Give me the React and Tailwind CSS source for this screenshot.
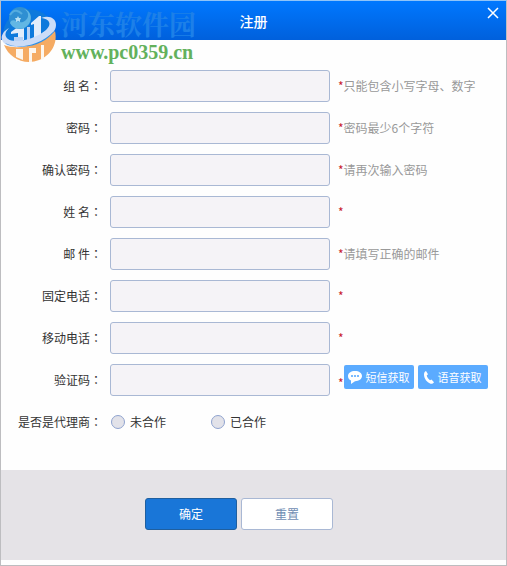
import React, { useState } from "react";

const FIELDS = [
  { id: "group", label: "组 名", hint: "只能包含小写字母、数字" },
  { id: "password", label: "密码", hint: "密码最少6个字符", type: "password" },
  { id: "confirm", label: "确认密码", hint: "请再次输入密码", type: "password" },
  { id: "name", label: "姓 名", hint: "" },
  { id: "email", label: "邮 件", hint: "请填写正确的邮件", type: "email" },
  { id: "phone", label: "固定电话", hint: "", type: "tel" },
  { id: "mobile", label: "移动电话", hint: "", type: "tel" },
];

const inputClass =
  "block h-8 w-[220px] shrink-0 rounded-[3px] border border-[#a9b8d4] bg-[#f5f3f7] px-2 text-xs outline-none focus:border-[#1976d2]";

const Colon = () => (
  <span className="font-['Noto_Sans_CJK_TC',sans-serif]">：</span>
);

const Star = () => <span className="leading-3 text-[#c8202c]">*</span>;

const Watermark = () => (
  <div className="pointer-events-none absolute left-0 top-1 flex gap-1">
    <svg width="56" height="60" viewBox="1 5 56 60" aria-hidden="true">
      {/* disc, blue above the ring and orange below */}
      <path d="M3 35A26 26 0 0 1 54 28L45 38L14 46Z" fill="#0d79dc" />
      <path d="M4 45C20 51 44 44 55 31C59 48 45 62 29 62C18 62 8 55 4 45Z" fill="#f5ab63" />
      {/* towers */}
      <path d="M11 32L22 24H24V40H18V33L11 34Z" fill="#e3edfb" />
      <path d="M31 23L39 16H41V36L34 39V24L31 25Z" fill="#e3edfb" />
      <path d="M14 37H23V42L14 43ZM27 27H30V40L27 41Z" fill="#b9d2f5" />
      <path d="M16 49H23V60L16 57ZM29 48H36V53H32V62H29ZM41 45H44V59L41 60Z" fill="#fdf6ee" />
      {/* ring */}
      <path
        d="M9 28C-2 34 -1 46 15 47C34 48 56 37 56 25C56 18 49 15 41 18C50 19 52 24 46 30C36 39 15 44 8 39C4 36 5 32 9 28Z"
        fill="#cbdcf8"
      />
      <path d="M5 43C12 49 39 48 54 31C47 43 25 52 5 43Z" fill="#2d8fe6" />
      {/* emblem */}
      <circle cx="20" cy="18" r="11" fill="#2f8fd2" />
      <path
        d="M10 23C13 15 19 27 26 20C30 16 28 11 24 9C32 11 33 21 27 26C21 31 13 29 10 23Z"
        fill="#62b7e4"
      />
      <path d="M10 15C14 8 19 11 22 14" fill="none" stroke="#55acdf" strokeWidth="2" />
      <path d="M18 16L19 18L21 18L20 20L20 22L18 21L16 22L16 20L15 18L17 18Z" fill="#b7e0f4" />
    </svg>
    <div className="flex flex-col pt-0.5">
      <span className="font-['Noto_Serif_CJK_SC','Noto_Sans_CJK_SC',serif] text-[27px] leading-[34px] font-bold text-[#1d80e8]">
        河东软件园
      </span>
      <span className="font-['Liberation_Serif',serif] text-[20px] leading-[22px] font-bold text-[#63b15c]">
        www.pc0359.cn
      </span>
    </div>
  </div>
);

const App = () => {
  const [values, setValues] = useState({});
  const [agent, setAgent] = useState("");

  const handleChange = (e) =>
    setValues((prev) => ({ ...prev, [e.target.name]: e.target.value }));

  const handleReset = () => {
    setValues({});
    setAgent("");
  };

  return (
    <div className="relative border border-[#bdbdc0] border-t-[#8fc4f8] bg-[#fefefe] pb-[5px] font-['Noto_Sans_CJK_SC',sans-serif] text-xs text-[#333]">
      {/* Title bar */}
      <header className="relative flex h-[39px] items-center justify-center bg-gradient-to-b from-[#0078ff] to-[#0060dc]">
        <h1 className="text-sm font-medium text-white">注册</h1>
        <button
          type="button"
          aria-label="关闭"
          className="absolute right-[7px] top-[6px] text-white"
        >
          <svg width="12" height="12" viewBox="0 0 12 12" fill="none" stroke="currentColor" strokeWidth="1.5">
            <path d="M1 1L11 11M11 1L1 11" />
          </svg>
        </button>
      </header>

      <form onSubmit={(e) => e.preventDefault()} onReset={handleReset}>
        <div className="flex flex-col gap-[10px] pt-[30px] pb-8">
          {FIELDS.map((field) => (
            <div key={field.id} className="flex items-center gap-2">
              <label htmlFor={field.id} className="w-[101px] shrink-0 text-right whitespace-nowrap">
                {field.label}
                <Colon />
              </label>
              <input
                id={field.id}
                name={field.id}
                type={field.type || "text"}
                value={values[field.id] || ""}
                onChange={handleChange}
                className={inputClass}
              />
              <span className="whitespace-nowrap text-[#999]">
                <Star />
                {field.hint}
              </span>
            </div>
          ))}

          {/* Verification code */}
          <div className="flex items-center gap-2">
            <label htmlFor="code" className="w-[101px] shrink-0 text-right whitespace-nowrap">
              验证码
              <Colon />
            </label>
            <input
              id="code"
              name="code"
              type="text"
              value={values.code || ""}
              onChange={handleChange}
              className={inputClass}
            />
            <div className="flex items-end self-start pt-px">
              <Star />
              <div className="flex gap-1">
                <button
                  type="button"
                  className="flex h-6 w-[70px] items-center justify-center gap-1 rounded-xs bg-[#5babff] text-[11px] whitespace-nowrap text-white"
                >
                  <svg width="14" height="13" viewBox="0 0 14 13" aria-hidden="true">
                    <path
                      d="M7 0C3 0 0 2 0 5C0 7 1 8.500 3 9.500L3 13L7 10.200C11 10.200 14 8 14 5C14 2 11 0 7 0Z"
                      fill="#fff"
                    />
                    <circle cx="4" cy="5" r="1.100" fill="#5babff" />
                    <circle cx="7" cy="5" r="1.100" fill="#5babff" />
                    <circle cx="10" cy="5" r="1.100" fill="#5babff" />
                  </svg>
                  短信获取
                </button>
                <button
                  type="button"
                  className="flex h-6 w-[70px] items-center justify-center gap-1 rounded-xs bg-[#5babff] text-[11px] whitespace-nowrap text-white"
                >
                  <svg width="10" height="13" viewBox="0 0 10 13" aria-hidden="true">
                    <path
                      d="M2 0L4 3.2L2.7 4.5C3.2 6.5 4.5 8.2 6 9.2L7.5 8.6L10 11.2C9 12.6 7.8 13 6.5 12.7C3 11.5 0 7.5 0 3.5C0 1.8 .8.6 2 0Z"
                      fill="#fff"
                    />
                  </svg>
                  语音获取
                </button>
              </div>
            </div>
          </div>

          <div role="radiogroup" aria-labelledby="agent-label" className="flex h-8 items-center gap-2">
            <span id="agent-label" className="w-[101px] shrink-0 text-right whitespace-nowrap">
              是否是代理商
              <Colon />
            </span>
            {["未合作", "已合作"].map((option) => (
              <label key={option} className="flex w-[92px] items-center gap-1">
                <input
                  type="radio"
                  name="agent"
                  value={option}
                  checked={agent === option}
                  onChange={() => setAgent(option)}
                  className="m-px size-[14px] appearance-none rounded-full border border-[#8fa3cf] bg-[#e2e2e9] checked:bg-[#1976d2]"
                />
                {option}
              </label>
            ))}
          </div>
        </div>

        {/* Actions */}
        <div className="flex h-[90px] items-start gap-1 bg-[#e5e3e7] pt-7 pl-36">
          <button
            type="submit"
            className="h-8 w-[92px] rounded-[3px] border border-[#1f5f9f] bg-[#1976d8] text-white"
          >
            确定
          </button>
          <button
            type="reset"
            className="h-8 w-[92px] rounded-[3px] border border-[#a9b8d4] bg-white text-[#6f8db3]"
          >
            重置
          </button>
        </div>
      </form>

      <Watermark />
    </div>
  );
};

export default App;
